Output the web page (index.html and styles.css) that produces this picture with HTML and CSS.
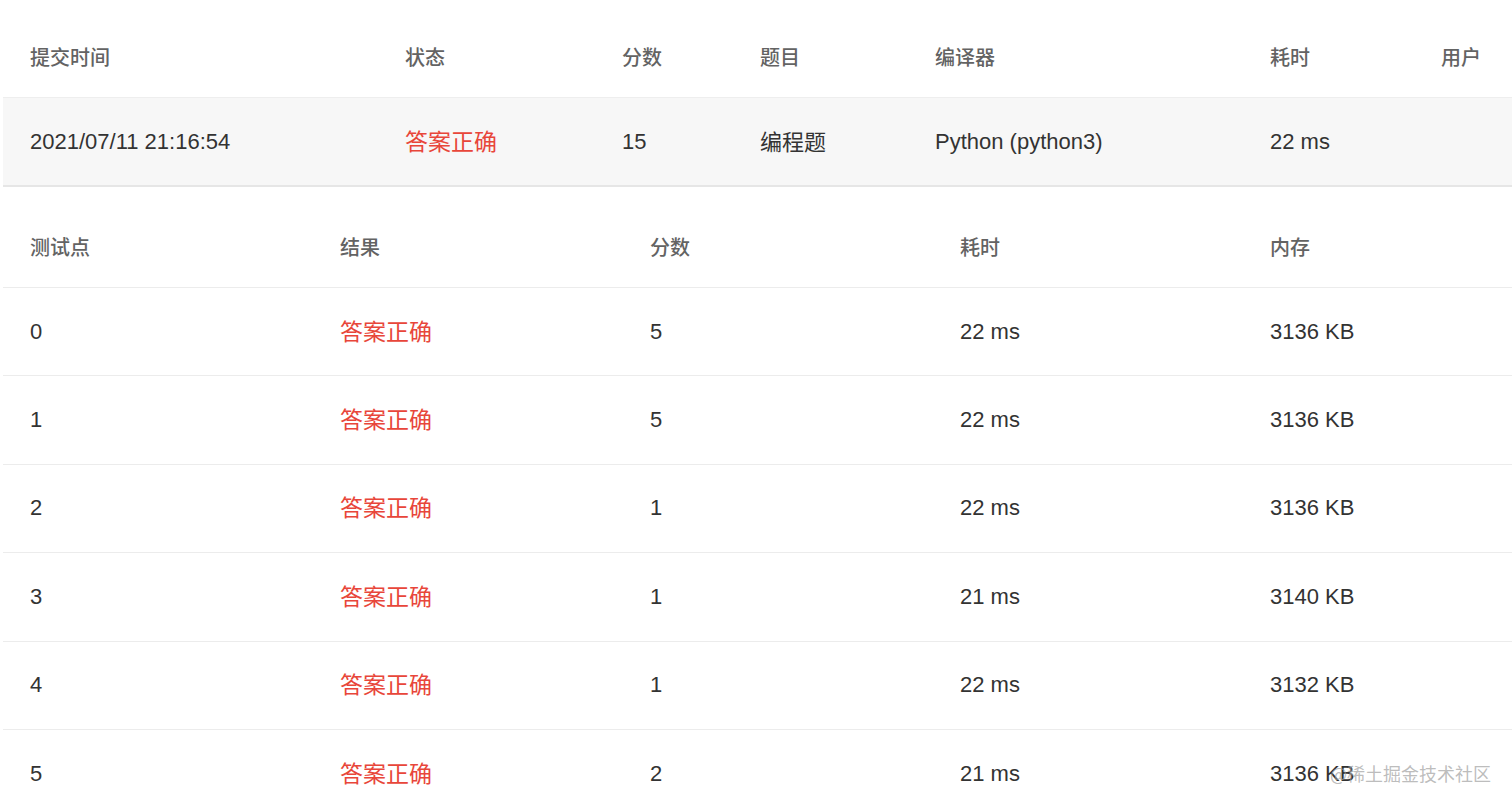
FILE: index.html
```html
<!DOCTYPE html>
<html lang="zh-CN">
<head>
<meta charset="utf-8">
<title>提交详情</title>
<link rel="stylesheet" href="styles.css">
</head>
<body>
<div class="page">
  <table class="grid summary">
    <colgroup>
      <col class="c375"><col class="c217"><col class="c138"><col class="c175"><col class="c335"><col class="c171"><col>
    </colgroup>
    <thead>
      <tr><th>提交时间</th><th>状态</th><th>分数</th><th>题目</th><th>编译器</th><th>耗时</th><th>用户</th></tr>
    </thead>
    <tbody>
      <tr class="hl"><td>2021/07/11 21:16:54</td><td class="ok">答案正确</td><td>15</td><td class="cjk">编程题</td><td>Python (python3)</td><td>22 ms</td><td></td></tr>
    </tbody>
  </table>
  <table class="grid cases">
    <colgroup>
      <col class="c310"><col class="c310"><col class="c310"><col class="c310"><col>
    </colgroup>
    <thead>
      <tr><th>测试点</th><th>结果</th><th>分数</th><th>耗时</th><th>内存</th></tr>
    </thead>
    <tbody>
      <tr><td>0</td><td class="ok">答案正确</td><td>5</td><td>22 ms</td><td>3136 KB</td></tr>
      <tr><td>1</td><td class="ok">答案正确</td><td>5</td><td>22 ms</td><td>3136 KB</td></tr>
      <tr><td>2</td><td class="ok">答案正确</td><td>1</td><td>22 ms</td><td>3136 KB</td></tr>
      <tr><td>3</td><td class="ok">答案正确</td><td>1</td><td>21 ms</td><td>3140 KB</td></tr>
      <tr><td>4</td><td class="ok">答案正确</td><td>1</td><td>22 ms</td><td>3132 KB</td></tr>
      <tr><td>5</td><td class="ok">答案正确</td><td>2</td><td>21 ms</td><td>3136 KB</td></tr>
    </tbody>
  </table>
  <div class="watermark">@稀土掘金技术社区</div>
</div>
</body>
</html>
```

FILE: styles.css
```css
html, body {
  margin: 0;
  padding: 0;
  background: #ffffff;
}
body {
  font-family: "Liberation Sans", "Noto Sans CJK SC", sans-serif;
  color: #333333;
  overflow: hidden;
}
.page {
  position: relative;
  padding-left: 3px;
  height: 809px;
}
.grid {
  width: 1509px;
  border-collapse: collapse;
  table-layout: fixed;
}
.c375 { width: 375px; }
.c217 { width: 217px; }
.c138 { width: 138px; }
.c175 { width: 175px; }
.c335 { width: 335px; }
.c171 { width: 171px; }
.c310 { width: 310px; }

.grid th {
  text-align: left;
  font-family: "Noto Sans CJK SC", sans-serif;
  font-size: 20px;
  font-weight: 500;
  color: #636363;
  padding: 0 0 29px 27px;
  vertical-align: bottom;
  line-height: 22px;
  white-space: nowrap;
}
.summary th { height: 68px; }
.cases th { height: 71px; }

.grid td {
  padding: 0 0 0 27px;
  font-size: 22px;
  line-height: 26px;
  white-space: nowrap;
  vertical-align: middle;
  color: #333333;
}
.summary td { height: 87px; }
.summary tr.hl td {
  background: #f7f7f7;
  border-top: 1px solid #eeeeee;
  border-bottom: 2px solid #e6e6e6;
}
.cases tbody td {
  height: 87.4px;
  border-top: 1px solid #ececec;
}
.grid td.ok,
.grid td.cjk {
  font-family: "Noto Sans CJK SC", sans-serif;
  padding-bottom: 4px;
}
.summary td.ok,
.summary td.cjk { height: 83px; }
.cases tbody td.ok { height: 83.4px; }
.grid td.ok {
  color: #e8463a;
  font-size: 23px;
}
.watermark {
  position: absolute;
  left: 1330px;
  top: 761px;
  font-family: "Noto Sans CJK SC", sans-serif;
  font-size: 18px;
  line-height: 24px;
  color: rgba(160, 160, 160, 0.7);
  white-space: nowrap;
}
```
